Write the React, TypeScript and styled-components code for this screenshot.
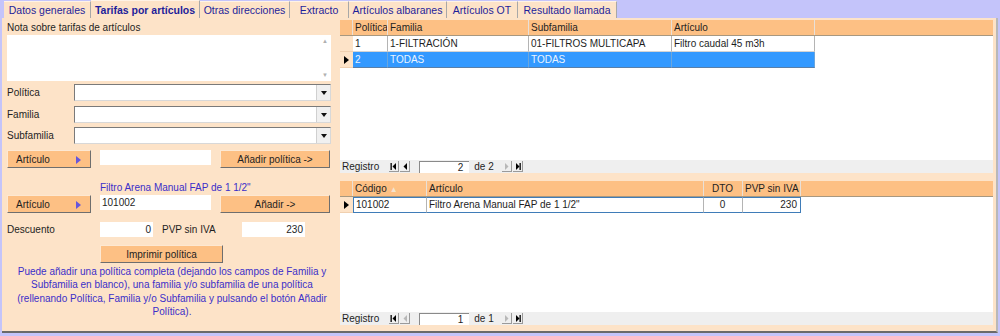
import React from 'react';
import styled, {createGlobalStyle} from 'styled-components';

const GlobalStyle = createGlobalStyle`
    html, body {
        margin: 0;
        padding: 0;
    }
    body {
        font-family: "Liberation Sans", Arial, sans-serif;
        font-size: 10px;
        color: #1e1e1e;
        background: #c4c4fa;
    }
`;

const PEACH = '#fde3c8';
const ORANGE = '#fdc084';
const BLUE_TEXT = '#3b2fc9';

const Screen = styled.div`
    width: 1000px;
    height: 336px;
    background: #c4c4fa;
    display: flex;
    flex-direction: column;
    overflow: hidden;
`;

const TabBar = styled.div`
    display: flex;
    align-items: flex-end;
    height: 18px;
    padding-left: 4px;
`;

const Tab = styled.div<{$active?:boolean; $w:number}>`
    width: ${(p) => p.$w}px;
    height: ${(p) => p.$active ? 18 : 17}px;
    box-sizing: border-box;
    background: ${PEACH};
    border-right: 1px solid #a8a8a8;
    border-top: 1px solid #fff3e6;
    color: #1e1e9a;
    font-size: 10.5px;
    font-weight: ${(p) => p.$active ? 'bold' : 'normal'};
    display: flex;
    align-items: center;
    justify-content: center;
    white-space: nowrap;
`;

const Panel = styled.div`
    margin-left: 2px;
    width: 996px;
    height: 315px;
    box-sizing: border-box;
    background: ${PEACH};
    border-right: 2px solid #b8b8b8;
    border-bottom: 2px solid #6a6a6a;
    display: flex;
`;

const LeftPane = styled.div`
    width: 336px;
    box-sizing: border-box;
    padding: 2px 0 0 5px;
    display: flex;
    flex-direction: column;
`;

const RightPane = styled.div`
    flex: 1;
    padding: 2px 3px 0 2px;
    display: flex;
    flex-direction: column;
    gap: 8px;
`;

const Label = styled.div`
    height: 15px;
    line-height: 15px;
`;

const Memo = styled.div`
    width: 324px;
    height: 46px;
    background: #fff;
    display: flex;
    justify-content: flex-end;
`;

const MemoScroll = styled.div`
    width: 12px;
    display: flex;
    flex-direction: column;
    justify-content: space-between;
    align-items: center;
    color: #b0b0b0;
    font-size: 6px;
    padding: 3px 0;
`;

const FieldRow = styled.div<{$top:number}>`
    display: grid;
    grid-template-columns: 67px 257px;
    align-items: center;
    height: 17px;
    margin-top: ${(p) => p.$top}px;
`;

const Combo = styled.div`
    height: 17px;
    box-sizing: border-box;
    background: #fff;
    border: 1px solid;
    border-color: #7a7a7a #d8d8d8 #d8d8d8 #7a7a7a;
    display: flex;
    justify-content: flex-end;
`;

const ComboArrow = styled.div`
    width: 13px;
    background: #f0f0f0;
    border-left: 1px solid #d0d0d0;
    display: flex;
    align-items: center;
    justify-content: center;
    &::after {
        content: '';
        border-left: 3px solid transparent;
        border-right: 3px solid transparent;
        border-top: 4px solid #111;
    }
`;

const ActionRow = styled.div<{$top:number}>`
    display: grid;
    grid-template-columns: 84px 111px 110px;
    column-gap: 9px;
    align-items: start;
    height: 18px;
    margin-top: ${(p) => p.$top}px;
`;

const Btn = styled.div<{$align?:'left' | 'center'}>`
    height: 18px;
    box-sizing: border-box;
    background: ${ORANGE};
    border: 1px solid;
    border-color: #fde8d2 #6e6e6e #6e6e6e #fde8d2;
    display: flex;
    align-items: center;
    justify-content: ${(p) => p.$align === 'left' ? 'space-between' : 'center'};
    padding: ${(p) => p.$align === 'left' ? '0 9px 0 8px' : '0'};
`;

const BlueArrow = styled.span`
    width: 0;
    height: 0;
    border-top: 4px solid transparent;
    border-bottom: 4px solid transparent;
    border-left: 5px solid #6656dc;
    margin-top: 2px;
`;

const TextBox = styled.div<{$right?:boolean}>`
    height: 15px;
    line-height: 15px;
    background: #fff;
    padding: 0 2px;
    box-sizing: border-box;
    text-align: ${(p) => p.$right ? 'right' : 'left'};
`;

const Caption = styled.div`
    color: ${BLUE_TEXT};
    margin: 13px 0 0 93px;
    height: 14px;
    line-height: 14px;
`;

const PriceRow = styled.div`
    display: grid;
    grid-template-columns: 93px 53px 89px 63px;
    align-items: center;
    height: 15px;
    margin-top: 9px;
    & > :nth-child(3) {
        padding-left: 9px;
    }
`;

const PrintRow = styled.div`
    margin: 8px 0 0 93px;
    width: 123px;
`;

const Note = styled.p`
    margin: 2px 0 0;
    width: 330px;
    color: ${BLUE_TEXT};
    text-align: center;
    line-height: 13.4px;
`;

const Grid = styled.div<{$h:number}>`
    height: ${(p) => p.$h}px;
    display: flex;
    flex-direction: column;
    background: #fff;
`;

const HeaderRow = styled.div<{$cols:string}>`
    display: grid;
    grid-template-columns: ${(p) => p.$cols} 1fr;
    height: 16px;
    background: ${ORANGE};
    border-bottom: 1px solid #a89880;
    box-sizing: border-box;
`;

const HeadCell = styled.div<{$align?:string}>`
    border-right: 1px solid #e8e0d8;
    padding: 0 3px 0 2px;
    line-height: 15px;
    text-align: ${(p) => p.$align || 'left'};
    white-space: nowrap;
    overflow: hidden;
    &:last-child {
        border-right: none;
    }
`;

const SortMark = styled.span`
    color: #f4e4d0;
    font-size: 8px;
    margin-left: 3px;
`;

const Body = styled.div`
    flex: 1;
`;

const DataRow = styled.div<{$cols:string; $selected?:boolean}>`
    display: grid;
    grid-template-columns: ${(p) => p.$cols};
    height: 16px;
    width: max-content;
    color: ${(p) => p.$selected ? '#eaf4ff' : '#1e1e1e'};
`;

const Cell = styled.div<{$align?:string; $selected?:boolean; $focused?:boolean}>`
    box-sizing: border-box;
    padding: 0 3px 0 2px;
    line-height: 15px;
    white-space: nowrap;
    overflow: hidden;
    text-align: ${(p) => p.$align || 'left'};
    background: ${(p) => p.$selected ? '#3399ff' : '#fff'};
    border-right: 1px solid ${(p) => p.$selected ? '#6aa6dd' : '#b4b4b4'};
    border-bottom: 1px solid ${(p) => p.$selected ? '#5a7fa8' : '#d4d4d4'};
    ${(p) => p.$focused ? `
        border-top: 1px solid #3f7cb8;
        border-bottom: 1px solid #3f7cb8;
        line-height: 13px;
        &:last-child { border-right: 1px solid #3f7cb8; }
        &:nth-child(2) { border-left: 1px solid #3f7cb8; }
    ` : ''}
`;

const Selector = styled.div<{$current?:boolean}>`
    background: ${PEACH};
    border-bottom: 1px solid #f0d0b0;
    display: flex;
    align-items: center;
    justify-content: center;
    ${(p) => p.$current ? `
        &::after {
            content: '';
            border-top: 4px solid transparent;
            border-bottom: 4px solid transparent;
            border-left: 5px solid #000;
        }
    ` : ''}
`;

const NavBar = styled.div`
    height: 13px;
    background: #efefef;
    display: flex;
    align-items: center;
    padding-left: 2px;
    line-height: 13px;
`;

const NavText = styled.span<{$gap?:number}>`
    margin-right: ${(p) => p.$gap ?? 0}px;
`;

const NavBtn = styled.div<{$dim?:boolean}>`
    width: 10px;
    height: 11px;
    box-sizing: border-box;
    border-right: 1px solid #9a9a9a;
    border-bottom: 1px solid #9a9a9a;
    display: flex;
    align-items: center;
    justify-content: center;
    color: ${(p) => p.$dim ? '#b8b8b8' : '#000'};
    margin-right: 1px;
`;

const NavInput = styled.div`
    width: 50px;
    height: 12px;
    box-sizing: border-box;
    background: #fff;
    border-left: 1px solid #8a8a8a;
    border-top: 1px solid #8a8a8a;
    text-align: right;
    padding-right: 6px;
    line-height: 11px;
    margin: 0 5px 0 8px;
`;

type NavIcon = 'first' | 'prev' | 'next' | 'last';

const NavGlyph = ({kind}:{kind:NavIcon}) => {
    const tri = kind === 'first' || kind === 'prev' ? 'M6 1 L6 8 L2.5 4.5 Z' : 'M3 1 L3 8 L6.5 4.5 Z';
    return (
        <svg width="8" height="9" viewBox="0 0 8 9">
            <path d={tri} fill="currentColor"/>
            {kind === 'first' && <rect x="0.5" y="1" width="1.3" height="7" fill="currentColor"/>}
            {kind === 'last' && <rect x="6.5" y="1" width="1.3" height="7" fill="currentColor"/>}
        </svg>
    );
};

const Navigator = ({pos, total}:{pos:number; total:number}) => (
    <NavBar>
        <NavText $gap={10}>Registro</NavText>
        <NavBtn><NavGlyph kind="first"/></NavBtn>
        <NavBtn $dim={pos === 1}><NavGlyph kind="prev"/></NavBtn>
        <NavInput>{pos}</NavInput>
        <NavText $gap={8}>de {total}</NavText>
        <NavBtn $dim={pos === total}><NavGlyph kind="next"/></NavBtn>
        <NavBtn><NavGlyph kind="last"/></NavBtn>
    </NavBar>
);

const policyCols = '13px 35px 141px 143px 143px';
const policyRows = [
    {pol: '1', fam: '1-FILTRACIÓN', sub: '01-FILTROS MULTICAPA', art: 'Filtro caudal 45 m3h'},
    {pol: '2', fam: 'TODAS', sub: 'TODAS', art: ''},
];

const itemCols = '13px 74px 277px 39px 58px';

const tabs = [
    {label: 'Datos generales', w: 87},
    {label: 'Tarifas por artículos', w: 109, active: true},
    {label: 'Otras direcciones', w: 90},
    {label: 'Extracto', w: 59},
    {label: 'Artículos albaranes', w: 98},
    {label: 'Artículos OT', w: 71},
    {label: 'Resultado llamada', w: 99},
];

const ComboField = ({label, top}:{label:string; top:number}) => (
    <FieldRow $top={top}>
        <span>{label}</span>
        <Combo><ComboArrow/></Combo>
    </FieldRow>
);

export default function App() {
    return (
        <Screen>
            <GlobalStyle/>
            <TabBar>
                {tabs.map((t) => (
                    <Tab key={t.label} $w={t.w} $active={t.active}>{t.label}</Tab>
                ))}
            </TabBar>
            <Panel>
                <LeftPane>
                    <Label>Nota sobre tarifas de artículos</Label>
                    <Memo>
                        <MemoScroll><span>▲</span><span>▼</span></MemoScroll>
                    </Memo>
                    <ComboField label="Política" top={3}/>
                    <ComboField label="Familia" top={5}/>
                    <ComboField label="Subfamilia" top={4}/>
                    <ActionRow $top={6}>
                        <Btn $align="left">Artículo<BlueArrow/></Btn>
                        <TextBox/>
                        <Btn>Añadir política -&gt;</Btn>
                    </ActionRow>
                    <Caption>Filtro Arena Manual FAP de 1 1/2"</Caption>
                    <ActionRow $top={0}>
                        <Btn $align="left">Artículo<BlueArrow/></Btn>
                        <TextBox>101002</TextBox>
                        <Btn>Añadir -&gt;</Btn>
                    </ActionRow>
                    <PriceRow>
                        <span>Descuento</span>
                        <TextBox $right>0</TextBox>
                        <span>PVP sin IVA</span>
                        <TextBox $right>230</TextBox>
                    </PriceRow>
                    <PrintRow>
                        <Btn>Imprimir política</Btn>
                    </PrintRow>
                    <Note>
                        Puede añadir una política completa (dejando los campos de Familia y
                        Subfamilia en blanco), una familia y/o subfamilia de una política
                        (rellenando Política, Familia y/o Subfamilia y pulsando el botón Añadir
                        Política).
                    </Note>
                </LeftPane>
                <RightPane>
                    <Grid $h={153}>
                        <HeaderRow $cols={policyCols}>
                            <HeadCell/>
                            <HeadCell>Política</HeadCell>
                            <HeadCell>Familia</HeadCell>
                            <HeadCell>Subfamilia</HeadCell>
                            <HeadCell>Artículo</HeadCell>
                            <HeadCell/>
                        </HeaderRow>
                        <Body>
                            {policyRows.map((r, i) => {
                                const sel = i === 1;
                                return (
                                    <DataRow key={i} $cols={policyCols} $selected={sel}>
                                        <Selector $current={sel}/>
                                        <Cell $selected={sel}>{r.pol}</Cell>
                                        <Cell $selected={sel}>{r.fam}</Cell>
                                        <Cell $selected={sel}>{r.sub}</Cell>
                                        <Cell $selected={sel}>{r.art}</Cell>
                                    </DataRow>
                                );
                            })}
                        </Body>
                        <Navigator pos={2} total={2}/>
                    </Grid>
                    <Grid $h={144}>
                        <HeaderRow $cols={itemCols}>
                            <HeadCell/>
                            <HeadCell>Código<SortMark>▲</SortMark></HeadCell>
                            <HeadCell>Artículo</HeadCell>
                            <HeadCell $align="center">DTO</HeadCell>
                            <HeadCell $align="right">PVP sin IVA</HeadCell>
                            <HeadCell/>
                        </HeaderRow>
                        <Body>
                            <DataRow $cols={itemCols}>
                                <Selector $current/>
                                <Cell $focused>101002</Cell>
                                <Cell $focused>Filtro Arena Manual FAP de 1 1/2"</Cell>
                                <Cell $focused $align="center">0</Cell>
                                <Cell $focused $align="right">230</Cell>
                            </DataRow>
                        </Body>
                        <Navigator pos={1} total={1}/>
                    </Grid>
                </RightPane>
            </Panel>
        </Screen>
    );
}
